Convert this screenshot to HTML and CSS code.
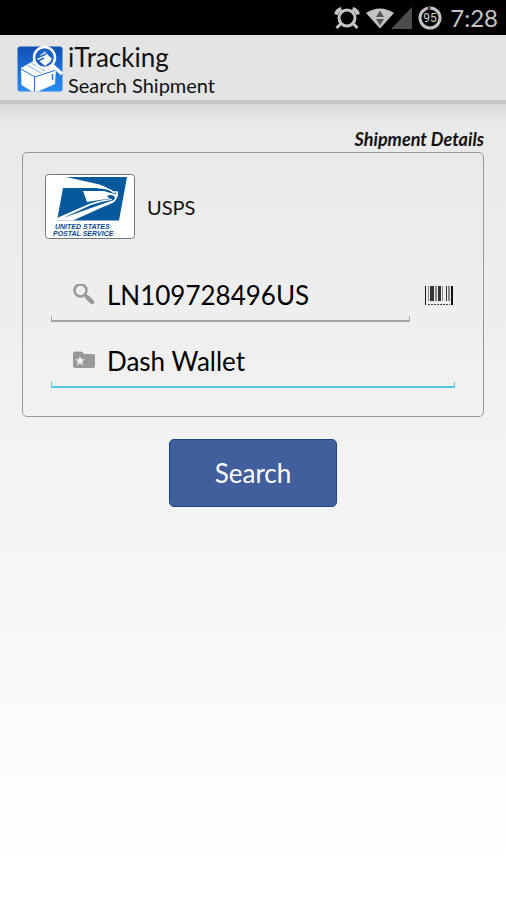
FILE: index.html
```html
<!DOCTYPE html>
<html lang="en">
<head>
<meta charset="utf-8">
<meta name="viewport" content="width=device-width, initial-scale=1">
<title>iTracking</title>
<link rel="stylesheet" href="styles.css">
</head>
<body>
<div class="status-bar">
  <svg class="status-alarm" viewBox="0 0 26 22" width="26" height="22" aria-hidden="true">
    <g fill="none" stroke="#c4c4c4" stroke-width="3">
      <circle cx="13" cy="11" r="8"/>
      <path d="M7 16.500L2.500 21M19 16.500L23.500 21"/>
      <path stroke-width="4" d="M2 7.500Q3 3 7.500 2M24 7.500Q23 3 18.500 2"/>
    </g>
  </svg>
  <svg class="status-signal" viewBox="0 0 46 22" width="46" height="22" aria-hidden="true">
    <path fill="#c4c4c4" d="M0 6Q14-3 28 6L14 21.500Z"/>
    <path fill="#555" d="M14 3.500l4 6.500h-8zM14 18.500l-4-6.500h8z"/>
    <path fill="#4d4d4d" d="M46 0v22H25z"/>
  </svg>
  <svg class="status-battery" viewBox="0 0 24 24" width="24" height="24" role="img" aria-label="Battery 95%">
    <circle cx="12" cy="12" r="10" fill="none" stroke="#c4c4c4" stroke-width="3"/>
    <path d="M9.500 0h3v4h-3z" fill="#444"/>
    <text class="battery-value" x="12" y="16" text-anchor="middle">95</text>
  </svg>
  <time class="clock">7:28</time>
</div>

<header class="app-bar">
  <svg class="app-icon" viewBox="0 0 46 46" width="46" height="46" aria-hidden="true">
    <defs>
      <linearGradient id="icon-blue" x1="0" y1="0" x2="0" y2="1">
        <stop offset="0" stop-color="#0f51b5"/>
        <stop offset="1" stop-color="#2b8cf4"/>
      </linearGradient>
    </defs>
    <rect x="0.500" y="0.500" width="45" height="45" rx="2.500" fill="url(#icon-blue)"/>
    <path fill="#fff" d="M4 22L18 14 39 23 38 38 21 45.500H15L4.500 39Z"/>
    <path fill="none" stroke="#2674db" d="M4 23l14 8 21-7M17.500 31v14.500"/>
    <path fill="none" stroke="#7fb0ee" d="M10 19l14 8M14 17l14 8"/>
    <path fill="none" stroke="#2674db" stroke-width="1.500" d="M35.500 28v6"/>
    <circle cx="27.500" cy="11.500" r="10.500" fill="#1d60c2" stroke="#fff" stroke-width="2.500"/>
    <path fill="#fff" d="M20 13l7-8 8 8-2 3-5 4z"/>
    <path stroke="#1d60c2" stroke-width="1.500" d="M19 9l8-3M20 12l9-4M21 15l6-3"/>
    <path stroke="#fff" stroke-width="3.500" d="M35 19l10 9"/>
  </svg>
  <div class="app-titles">
    <h1 class="app-name">iTracking</h1>
    <p class="app-subtitle">Search Shipment</p>
  </div>
</header>

<main class="content">
  <form class="shipment-form" onsubmit="return false">
    <h2 class="section-title">Shipment Details</h2>
    <section class="card">
      <div class="carrier">
        <svg class="carrier-logo" viewBox="0 0 90 65" width="90" height="65" aria-hidden="true">
          <rect x="0.500" y="0.500" width="89" height="64" rx="3" fill="#fff" stroke="#777"/>
          <path fill="#06599d" d="M21 3H82L74 46.500H12L18 14H55Q62 14 66 17Q60 11 48 9Z"/>
          <path fill="none" stroke="#fff" stroke-width="1.500" d="M52 13.500Q64 14 68 18L72 18Q73 20 71 24L69 27Q66 29 61 31"/>
          <path fill="#fff" d="M38 17H59Q64 19 71 20Q73 22 70 24L69 22Q65 20 62 22L65 25Q59 25 42 28Z"/>
          <path fill="#fff" d="M12 44L44 30Q54 26 67 25L67 26Q58 27 46 31L18 44 63 28Q66 27 70 26L69 28 28 46.500H12Z"/>
          <text class="logo-text" x="10" y="55">UNITED STATES</text>
          <text class="logo-text" x="8" y="62">POSTAL SERVICE</text>
        </svg>
        <span class="carrier-name">USPS</span>
      </div>
      <div class="fields">
        <div class="field-row">
          <label class="field">
            <svg class="field-icon" viewBox="0 0 22 22" width="22" height="22" role="img" aria-label="Tracking number">
              <circle cx="7.500" cy="6.500" r="6" fill="none" stroke="#999" stroke-width="2.500"/>
              <path d="M12 11l2 2" stroke="#999" stroke-width="3"/>
              <path d="M14.500 13.500l4.500 4.500" stroke="#999" stroke-width="4.500" stroke-linecap="round"/>
            </svg>
            <input class="field-input" type="text" value="LN109728496US">
          </label>
          <button class="scan-button" type="button" aria-label="Scan barcode">
            <svg viewBox="0 0 28 20" width="28" height="20" aria-hidden="true">
              <path fill="#111" d="M0 0h1v19H0zM26 0h2v19h-2z"/>
              <path fill="#333" d="M5 0h4v15H5zM13 0h3v15h-3zM21 0h1v15h-1z"/>
              <path fill="#888" d="M3 0h1v15H3zM10 0h2v15h-2zM17 0h1v15h-1zM23 0h2v15h-2z"/>
              <path stroke="#444" stroke-dasharray="2 1" d="M3 18.500h22"/>
            </svg>
          </button>
        </div>
        <label class="field field-active">
          <svg class="field-icon" viewBox="0 0 22 22" width="22" height="22" role="img" aria-label="Description">
            <path fill="#999" d="M0 3.500Q0 1.500 2 1.500H8Q10 1.500 11 4H20Q22 4 22 6V16Q22 18 20 18H2Q0 18 0 16Z"/>
            <path fill="#f0f0f0" d="M7 6l1.300 3.200 3.700.1-2.900 2.300 1.100 3.600L7 13.200l-3.200 2 1.100-3.600L2 9.300l3.700-.1z"/>
          </svg>
          <input class="field-input" type="text" value="Dash Wallet">
        </label>
      </div>
    </section>
    <button class="search-button" type="submit">Search</button>
  </form>
</main>
</body>
</html>
```
FILE: styles.css
```css
* {
  box-sizing: border-box;
}

body {
  margin: 0;
  min-height: 100vh;
  display: flex;
  flex-direction: column;
  background: #fff;
  color: #111;
  font-family: Lato, "Liberation Sans", sans-serif;
}

h1,
h2,
p {
  margin: 0;
}

svg {
  display: block;
  flex: none;
}

.status-bar {
  display: flex;
  align-items: center;
  justify-content: flex-end;
  height: 35px;
  padding: 0 8px;
  background: #000;
  color: #c4c4c4;
}

.status-signal {
  margin: 0 6px;
}

.battery-value {
  fill: #d0d0d0;
  font: 12px Roboto, sans-serif;
}

.clock {
  margin-left: 8px;
  font-size: 24px;
  line-height: 36px;
}

.app-bar {
  display: flex;
  align-items: center;
  gap: 5px;
  height: 69px;
  padding: 2px 17px 0;
  background: #e4e4e4;
  border-bottom: 4px solid #c6c6c6;
}

.app-name {
  padding-top: 2px;
  font-size: 26px;
  font-weight: 400;
  line-height: 30px;
}

.app-subtitle {
  font-size: 20px;
  line-height: 26px;
}

.content {
  flex: 1;
  padding: 22px;
  background: linear-gradient(#dadada, #e9e9e9 20px, #f4f4f4 50%, #fff 96%);
}

.shipment-form {
  display: flex;
  flex-direction: column;
}

.section-title {
  align-self: flex-end;
  font-size: 18px;
  font-style: italic;
  font-weight: 700;
  line-height: 26px;
}

.card {
  padding: 21px 22px 28px;
  border: 1px solid #999;
  border-radius: 5px;
}

.carrier {
  display: flex;
  align-items: center;
  gap: 12px;
}

.carrier-name {
  font-size: 20px;
}

.logo-text {
  fill: #06488f;
  font: italic 700 7px "Liberation Sans", sans-serif;
}

.fields {
  display: flex;
  flex-direction: column;
  gap: 14px;
  margin: 31px 6px 0;
}

.field-row {
  display: flex;
  align-items: center;
  gap: 15px;
  padding-right: 2px;
}

.field {
  --line: #a5a5a5;
  display: flex;
  flex: 1;
  align-items: center;
  gap: 12px;
  min-width: 0;
  height: 52px;
  padding: 0 22px;
  border-bottom: 2px solid var(--line);
  background:
    linear-gradient(var(--line), var(--line)) left bottom / 1px 4px no-repeat,
    linear-gradient(var(--line), var(--line)) right bottom / 1px 4px no-repeat;
}

.field-active {
  --line: #55cbe8;
  flex: none;
}

.field-input {
  flex: 1;
  min-width: 0;
  padding: 0;
  border: 0;
  outline: 0;
  background: none;
  color: #000;
  font: inherit;
  font-size: 26px;
}

.scan-button {
  padding: 0;
  border: 0;
  background: none;
}

.search-button {
  align-self: center;
  width: 168px;
  height: 68px;
  margin-top: 22px;
  border: 1px solid #164789;
  border-radius: 5px;
  background: #415f9c;
  color: #fff;
  font: inherit;
  font-size: 26px;
}
```
